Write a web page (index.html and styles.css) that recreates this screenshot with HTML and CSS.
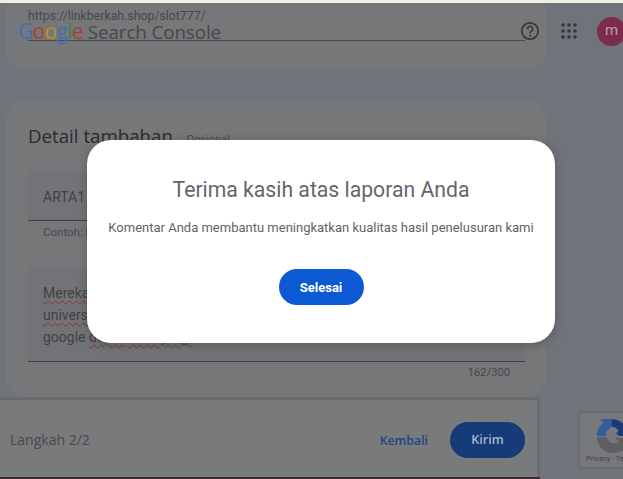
FILE: index.html
```html
<!DOCTYPE html>
<html lang="id">
<head>
<meta charset="utf-8">
<title>Google Search Console</title>
<link rel="stylesheet" href="styles.css">
</head>
<body>
<div class="page">
  <div class="topstrip"></div>
  <section class="card card-url">
    <div class="url-field">https://linkberkah.shop/slot777/</div>
  </section>
  <section class="card card-detail">
    <div class="detail-head">
      <h2 class="detail-title">Detail tambahan</h2>
      <span class="optional">Opsional</span>
    </div>
    <div class="input-box">ARTA1</div>
    <div class="hint">Contoh: https://</div>
    <div class="textarea-box">
      <div class="ta-line"><span class="typo">Mereka</span></div>
      <div class="ta-line"><span class="typo">universitas</span></div>
      <div class="ta-line">google <span class="typo">dapat</span> <span class="typo">dikunjungi</span></div>
    </div>
    <div class="counter">162/300</div>
  </section>
  <footer class="stepbar">
    <span class="step">Langkah 2/2</span>
    <div class="step-actions">
      <span class="back">Kembali</span>
      <span class="send">Kirim</span>
    </div>
  </footer>
  <div class="bottomline"></div>

  <header class="appbar">
    <div class="logo"><span class="logo-google"><span class="g-blue">G</span><span class="g-red">o</span><span class="g-yellow">o</span><span class="g-blue">g</span><span class="g-green">l</span><span class="g-red">e</span></span><span class="logo-product">Search Console</span></div>
    <div class="appbar-actions">
      <svg class="icon-help" width="20" height="20" viewBox="0 0 20 20">
        <circle cx="10" cy="10" r="8.2" fill="none" stroke="#35363a" stroke-width="1.7"/>
        <path d="M7.3 8a2.7 2.7 0 1 1 4.3 2.2c-.9.6-1.6 1.1-1.6 2.2" fill="none" stroke="#35363a" stroke-width="1.6"/>
        <circle cx="10" cy="14.700" r="1" fill="#35363a"/>
      </svg>
      <svg class="icon-apps" width="16" height="16" viewBox="0 0 16 16" fill="#35363a">
        <circle cx="2" cy="2" r="1.8"/><circle cx="8" cy="2" r="1.8"/><circle cx="14" cy="2" r="1.8"/>
        <circle cx="2" cy="8" r="1.8"/><circle cx="8" cy="8" r="1.8"/><circle cx="14" cy="8" r="1.8"/>
        <circle cx="2" cy="14" r="1.8"/><circle cx="8" cy="14" r="1.8"/><circle cx="14" cy="14" r="1.8"/>
      </svg>
      <div class="avatar">m</div>
    </div>
  </header>

  <aside class="recaptcha">
    <svg class="recaptcha-icon" width="34" height="36" viewBox="0 0 34 36">
      <path d="M1 18C1 12 4 7 8 4L5 0H17V8L14 10.500C11.500 12 10.500 15 10.500 18Z" fill="#375a9a"/>
      <path d="M17 0A17.500 17.500 0 0 1 34 18H24.500L21.500 15L24 12.500C22 9.500 19.500 8.500 17 8Z" fill="#1b3a78"/>
      <path d="M1 19H10.500L13 22C15 26 20 27 24 24L20 20H34V34H27C23 36 19 36 17 36C8 36 1 28 1 19Z" fill="#5d5f63"/>
    </svg>
    <div class="recaptcha-text">Privacy · Terms</div>
  </aside>

  <div class="dialog">
    <h1 class="dialog-title">Terima kasih atas laporan Anda</h1>
    <p class="dialog-text">Komentar Anda membantu meningkatkan kualitas hasil penelusuran kami</p>
    <button class="dialog-btn" type="button">Selesai</button>
  </div>
</div>
</body>
</html>
```

FILE: styles.css
```css
* { box-sizing: border-box; }
html, body { margin: 0; padding: 0; }
body { font-family: Roboto, "Liberation Sans", sans-serif; background: #70747a; }

.page {
  position: relative;
  width: 623px;
  height: 479px;
  overflow: hidden;
  background: #70747a;
  display: flex;
  flex-direction: column;
}
.topstrip { height: 3px; flex: none; background: #eef1e4; }
.bottomline { height: 2px; flex: none; width: 540px; background: #3c2b2c; }

.card { flex: none; width: 540px; margin-left: 6px; background: #767779; }
.card-url {
  height: 67px;
  border-radius: 0 0 20px 20px;
  padding: 0 21px 0 22px;
}
.url-field {
  height: 38px;
  border-bottom: 1px solid #48494c;
  padding-top: 6px;
  font-size: 12.300px;
  line-height: 14px;
  color: #47484b;
}
.card-detail {
  height: 297px;
  margin-top: 30px;
  border-radius: 20px;
  padding: 23px 21px 0 22px;
}
.detail-head { display: flex; align-items: baseline; gap: 14px; height: 48px; }
.detail-title {
  margin: 0;
  font-family: "Open Sans", sans-serif;
  font-weight: 400;
  font-size: 18.700px;
  line-height: 26px;
  color: #2a2b2e;
}
.optional { font-size: 11px; color: #47484b; }
.input-box {
  height: 50px;
  padding: 17px 15px 0;
  background: #727376;
  border-bottom: 1px solid #3e3f42;
  font-size: 14px;
  line-height: 18px;
  color: #404145;
}
.hint { height: 46px; padding: 4px 15px 0; font-size: 11.500px; line-height: 14px; color: #47484b; }
.textarea-box {
  height: 95px;
  padding: 15px 15px 0;
  background: #727376;
  border-bottom: 1px solid #3e3f42;
  font-size: 14px;
  color: #404145;
}
.ta-line { height: 22px; line-height: 22px; }
.typo { text-decoration: underline wavy #8c2f35 1px; text-underline-offset: 2px; }
.counter { padding: 4px 15px 0 0; text-align: right; font-size: 11.200px; line-height: 14px; color: #47484b; }

.stepbar {
  flex: none;
  width: 540px;
  height: 80px;
  padding: 22px 12px 0 10px;
  background: #797a7c;
  border-top: 3px solid #6a6b6e;
  border-right: 3px solid #6a6b6e;
  display: flex;
  align-items: flex-start;
  justify-content: space-between;
}
.step { font-family: "Open Sans", sans-serif; font-size: 14px; line-height: 36px; color: #47484c; }
.step-actions { display: flex; align-items: center; gap: 22px; }
.back { font-family: "Open Sans", sans-serif; font-size: 12.300px; font-weight: 600; color: #1c4786; }
.send {
  width: 75px;
  height: 36px;
  border-radius: 18px;
  background: #173a78;
  font-family: "Open Sans", sans-serif;
  font-size: 12.500px;
  font-weight: 600;
  line-height: 36px;
  text-align: center;
  color: #a7b6cd;
}

.appbar {
  position: absolute;
  left: 0;
  top: 17px;
  width: 623px;
  height: 28px;
  padding-left: 18px;
  display: flex;
  align-items: center;
  justify-content: space-between;
}
.logo { display: flex; align-items: baseline; font-family: "Open Sans", sans-serif; margin-top: -1px; }
.logo-google { font-size: 21px; font-weight: 500; letter-spacing: -.7px; margin-right: 5px; }
.logo-product { font-size: 18.800px; letter-spacing: -.1px; color: #46474b; }
.g-blue { color: #4070ba; }
.g-red { color: #ab3f38; }
.g-yellow { color: #ba9226; }
.g-green { color: #36864c; }
.appbar-actions { display: flex; align-items: center; }
.icon-help { margin-right: 21px; }
.icon-apps { margin-right: 20px; }
.avatar {
  width: 29px;
  height: 29px;
  margin-right: -3px;
  border-radius: 50%;
  background: #7b2b4b;
  color: #c09aa8;
  font-size: 15px;
  line-height: 27px;
  text-align: center;
}

.recaptcha {
  position: absolute;
  left: 580px;
  top: 413px;
  width: 60px;
  height: 54px;
  border-radius: 3px;
  background: #76787b;
  box-shadow: 0 0 3px #55575a;
  overflow: hidden;
  padding-top: 6px;
}
.recaptcha-icon { display: block; margin-left: 15px; height: 34px; }
.recaptcha-text {
  margin-top: 1px;
  padding-left: 6px;
  white-space: nowrap;
  font-size: 7.500px;
  line-height: 10px;
  color: #434447;
}

.dialog {
  position: absolute;
  left: 87px;
  top: 140px;
  width: 468px;
  height: 203px;
  border-radius: 24px;
  background: #fff;
  box-shadow: 0 2px 10px rgba(40, 42, 46, .35);
  display: flex;
  flex-direction: column;
  align-items: center;
  padding-top: 35px;
}
.dialog-title {
  margin: 0;
  font-family: Roboto, sans-serif;
  font-weight: 400;
  font-size: 21.200px;
  line-height: 30px;
  color: #63676c;
}
.dialog-text {
  margin: 14px 0 0;
  font-size: 13px;
  line-height: 18px;
  white-space: nowrap;
  color: #5f6368;
}
.dialog-btn {
  width: 85px;
  height: 36px;
  margin-top: 32px;
  padding: 0;
  border: 0;
  border-radius: 18px;
  background: #0b5ad4;
  color: #fff;
  font-family: Roboto, sans-serif;
  font-size: 13px;
  font-weight: 700;
}
```
